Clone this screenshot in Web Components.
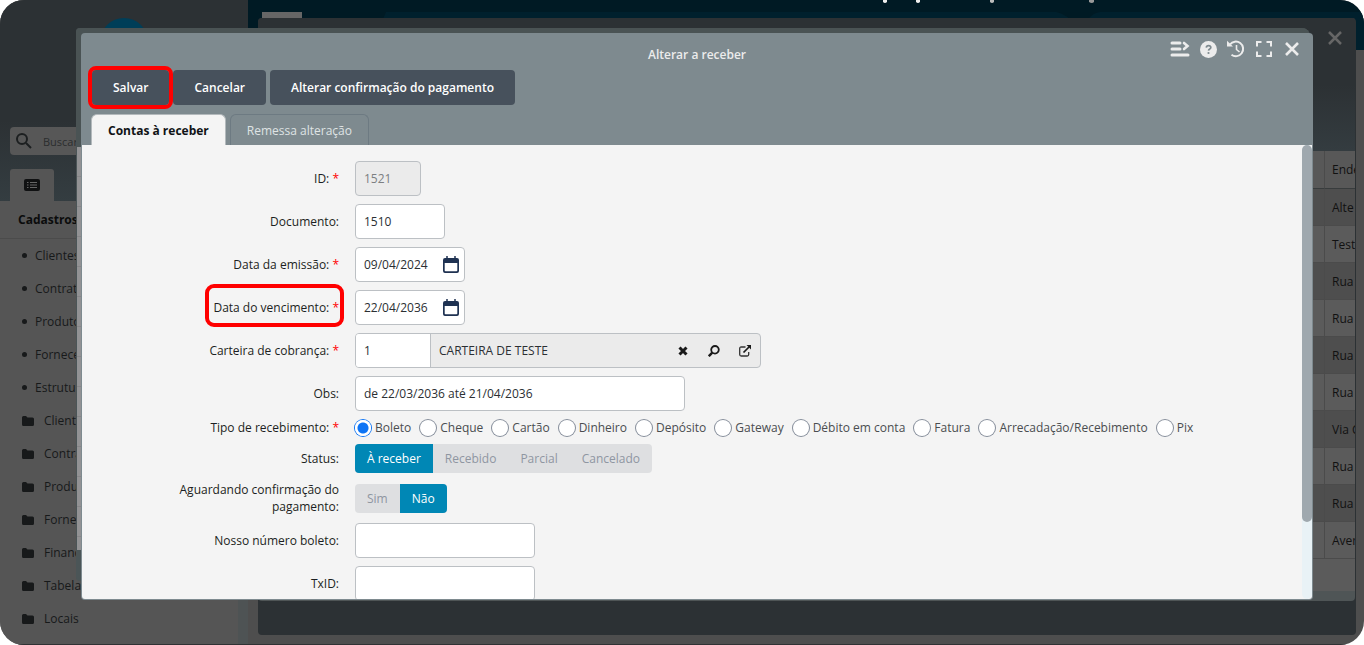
<!DOCTYPE html>
<html lang="pt-BR">
<head>
<meta charset="utf-8">
<title>Alterar a receber</title>
<style>
  html, body { margin: 0; background: #fff; }
  body { font: 12px/17px "Open Sans", "Noto Sans", sans-serif; color: #1c1f22; }
</style>
</head>
<body>
<app-shell></app-shell>

<template id="t-app-shell">
  <style>
    :host { display: flex; position: relative; height: 100vh; overflow: hidden; border-radius: 24px; background: #4e4e4e; }
    side-nav { flex: 0 0 248px; }
    main { flex: 1; min-width: 0; }
    .bar { height: 50px; background: #001a24; display: flex; align-items: flex-start; }
    .bar svg { width: 100%; height: 50px; display: block; }
    list-window { position: absolute; inset: 18px 8px 10px 258px; }
    stacked-window { position: absolute; inset: 28px 54px 64px 76px; }
    edit-dialog { position: absolute; inset: 33px 51px 45px 81px; }
    .base { position: absolute; inset: auto 0 0 0; height: 1px; background: #303234; }
  </style>
  <side-nav></side-nav>
  <main>
    <div class="bar">
      <svg viewBox="0 0 1116 50" preserveAspectRatio="xMinYMin slice" aria-hidden="true">
        <path d="M122 50 138 12h670q12 2 18 14v24zM840 50V20q4-7 12-8h400q16 2 22 12v26z" fill="#00202d"/>
        <path d="M14 12h40v8H14z" fill="#666"/>
        <g fill="#eee"><path d="M635 0h4v2q-2 2-4 0zM668 0h4v2q-2 2-4 0z"/><path d="M742 0h4v2q-2 2-4 0z" fill="#bbb"/><path d="M841 0h5v2q-2 2-5 0z" fill="#999"/></g>
      </svg>
    </div>
  </main>
  <list-window></list-window>
  <stacked-window></stacked-window>
  <edit-dialog></edit-dialog>
  <div class="base"></div>
</template>

<template id="t-side-nav">
  <style>
    :host { display: flex; flex-direction: column; background: #555; color: #17191a; overflow: hidden; }
    header { height: 201px; box-sizing: border-box; padding: 18px 10px 0; display: flex; flex-direction: column; background: linear-gradient(#2c3134 60%, #343d41); }
    .logo { align-self: center; width: 48px; height: 48px; border-radius: 50%; background: #003e58; }
    .search { margin-top: 61px; height: 28px; display: flex; align-items: center; gap: 8px; padding: 0 5px; background: #575757; border-radius: 4px; }
    .search input { border: 0; background: none; font: inherit; font-size: 11px; width: 150px; outline: 0; }
    .search input::placeholder { color: #2b2d2e; opacity: 1; }
    .tab { margin-top: 14px; width: 44px; height: 32px; border: 0; padding: 0; background: #555; border-radius: 3px 3px 0 0; display: grid; place-items: center; }
    h2 { margin: 0; height: 37px; padding-left: 18px; font: 700 12px/37px "Open Sans", sans-serif; border-bottom: 1px solid #4b4b4b; color: #0b0c0c; }
    .list { flex: 1; min-height: 0; display: flex; }
    ul { flex: 1; list-style: none; margin: 0; padding: 0; }
    .rail { width: 10px; background: #4e5354; }
  </style>
  <header>
    <div class="logo"></div>
    <label class="search">
      <svg width="18" height="18" viewBox="0 0 18 18" fill="none" stroke="#1c1f20" stroke-width="2"><circle cx="7" cy="7" r="5"/><path d="m11 11 5 5"/></svg>
      <input type="text" placeholder="Buscar" aria-label="Buscar">
    </label>
    <button class="tab" aria-label="Menu"><svg width="16" height="12" viewBox="0 0 16 12"><rect width="16" height="12" rx="2" fill="#101112"/><path d="M3 3.500h1.500M3 6h1.500M3 8.500h1.500M6 3.500h7M6 6h7M6 8.500h7" stroke="#666"/></svg></button>
  </header>
  <h2>Cadastros</h2>
  <div class="list">
    <ul>
      <nav-item>Clientes</nav-item><nav-item>Contratos</nav-item><nav-item>Produtos</nav-item><nav-item>Fornecedores</nav-item><nav-item>Estrutura</nav-item>
      <nav-item folder>Clientes</nav-item><nav-item folder>Contratos</nav-item><nav-item folder>Produtos</nav-item><nav-item folder>Fornecedores</nav-item><nav-item folder>Financeiro</nav-item><nav-item folder>Tabelas</nav-item><nav-item folder>Locais</nav-item>
    </ul>
    <div class="rail"></div>
  </div>
</template>

<template id="t-nav-item">
  <style>
    :host { display: block; }
    a { display: flex; align-items: center; height: 33px; padding-left: 22px; color: inherit; text-decoration: none; }
    .dot { width: 5px; height: 5px; border-radius: 50%; background: #17191a; margin-right: 8px; }
    svg { display: none; margin-right: 10px; }
    :host([folder]) .dot { display: none; }
    :host([folder]) svg { display: block; }
  </style>
  <a href="#"><span class="dot"></span><svg width="12" height="10" viewBox="0 0 12 10"><path d="M0 1.500Q0 0 1.500 0H4l1.500 1.500h5Q12 1.500 12 3v5.500Q12 10 10.500 10h-9Q0 10 0 8.500z" fill="#17191a"/></svg><slot></slot></a>
</template>

<template id="t-list-window">
  <style>
    :host { display: flex; flex-direction: column; box-sizing: border-box; background: #2c3134; border-radius: 4px; overflow: hidden; padding-right: 1px; color: #111; }
    header { flex: 0 0 133px; display: flex; justify-content: flex-end; align-items: flex-start; box-sizing: border-box; padding: 13px 13px 0 0; background: linear-gradient(#2c3134 50%, #343c40); }
    button { border: 0; padding: 0; background: none; width: 14px; height: 14px; display: grid; }
    .body { flex: 1; min-height: 0; overflow: hidden; background: #5b5b5b; }
    table { width: 100%; border-collapse: separate; border-spacing: 0; table-layout: fixed; }
    th, td { height: 36px; padding: 0; border-bottom: 1px solid #4b4b4b; font-weight: 400; text-align: left; white-space: nowrap; overflow: hidden; }
    th { height: 37px; background: #585858; border-bottom: 1px solid #383c3d; }
    tbody tr:nth-child(odd) td { background: #4e4e4e; }
    th:last-child, td:last-child { width: 23px; padding-left: 7px; border-left: 1px solid #4b4b4b; }
    .rail { flex: 0 0 10px; background: #4f5556; border-radius: 0 0 4px 4px; }
    footer { flex: 0 0 34px; }
  </style>
  <header><button aria-label="Fechar"><svg width="14" height="14" viewBox="0 0 14 14" stroke="#666" stroke-width="2.500"><path d="m1 1 12 12M13 1 1 13"/></svg></button></header>
  <div class="body">
    <table>
      <thead><tr><th></th><th>Ende</th></tr></thead>
      <tbody>
        <tr><td></td><td>Alte</td></tr><tr><td></td><td>Test</td></tr><tr><td></td><td>Rua</td></tr><tr><td></td><td>Rua</td></tr><tr><td></td><td>Rua</td></tr>
        <tr><td></td><td>Rua</td></tr><tr><td></td><td>Via C</td></tr><tr><td></td><td>Rua</td></tr><tr><td></td><td>Rua</td></tr><tr><td></td><td>Aver</td></tr>
      </tbody>
    </table>
  </div>
  <div class="rail"></div>
  <footer></footer>
</template>

<template id="t-stacked-window">
  <style>
    :host { display: flex; flex-direction: column; border-radius: 4px 8px 4px 4px; overflow: hidden; background: #4b5557; }
    .head { flex: 0 0 119px; background: #4a5354; }
    .body { flex: 1; margin: 0 1px; background: repeating-linear-gradient(#929294 0 29px, #858587 29px 30px); }
    .foot { flex: 0 0 31px; }
  </style>
  <div class="head"></div><div class="body"></div><div class="foot"></div>
</template>

<template id="t-form-row">
  <style>
    :host { display: grid; grid-template-columns: 257px 1fr; column-gap: 16px; align-items: center; }
    .label { display: flex; justify-content: flex-end; text-align: right; }
  </style>
  <div class="label"><slot name="label"></slot></div>
  <div><slot></slot></div>
</template>

<template id="t-radio-option">
  <style>
    :host { display: block; }
    label { display: flex; align-items: center; gap: 4px; height: 17px; color: #4a4d50; }
    input { appearance: none; width: 16px; height: 16px; margin: 0; border-radius: 50%; background: #fff; box-shadow: 0 0 0 1px #868e9b; }
    input:checked { background: radial-gradient(circle, #0d74f5 5px, #fff 6px); box-shadow: 0 0 0 1px #0d74f5; }
  </style>
  <label><input type="radio"><span><slot></slot></span></label>
</template>

<template id="t-segment-group">
  <style>
    :host { display: flex; width: max-content; height: 29px; border-radius: 4px; overflow: hidden; background: #dedfe1; }
    ::slotted(button) { border: 0; padding: 0 12px; font: inherit; background: none; color: #8f96a1; }
    ::slotted(button[aria-pressed="true"]) { background: #0087b5; color: #fff; }
  </style>
  <slot></slot>
</template>

<template id="t-edit-dialog">
  <style>
    :host { display: flex; flex-direction: column; background: #7e8a8f; border-radius: 4px; overflow: hidden; }
    .title { flex: 0 0 37px; display: grid; grid-template-columns: 1fr auto 1fr; align-items: start; }
    h1 { grid-column: 2; margin: 0; padding-top: 13px; font-size: 12px; line-height: 17px; font-weight: 600; color: #ececec; }
    .tools { justify-self: end; display: flex; align-items: center; gap: 8px; height: 20px; padding: 6px 11px 0 0; }
    .tools button { display: grid; place-items: center; width: 20px; height: 20px; border: 0; padding: 0; background: none; }
    .tools svg { display: block; }
    .actions { display: flex; gap: 4px; padding-left: 11px; }
    .actions button { height: 35px; padding: 0 21px; border: 0; border-radius: 4px; background: #47515c; color: #fff; font: inherit; font-weight: 600; }
    .actions .mark { outline: 4px solid #f00; position: relative; }
    .tabs { display: flex; gap: 4px; padding: 9px 0 0 10px; }
    .tabs button { height: 31px; box-sizing: border-box; border: 1px solid #6d7a82; border-bottom: 0; border-radius: 6px 6px 0 0; padding: 0 16px; background: none; color: #dfe3e4; font: inherit; font-weight: 500; }
    .tabs .on { background: #f4f4f4; border-color: #b3b9bc; color: #101316; font-weight: 700; }
    .view { flex: 1; min-height: 0; display: flex; margin: 0 1px 1px; background: #f4f4f4; border-radius: 0 0 3px 3px; overflow: hidden; }
    form { flex: 1; min-width: 0; overflow: hidden; display: flex; flex-direction: column; gap: 8px; padding-top: 16px; }
    form-row { flex: none; }
    label { position: relative; display: block; }
    label i { color: #f00; font-style: normal; }
    .mark-label::after { content: ""; position: absolute; inset: -15px -5px -11px -8px; border: 4px solid #f00; border-radius: 9px; }
    input, output { box-sizing: border-box; height: 35px; border: 1px solid #bcc0c4; border-radius: 4px; padding: 0 8px; font: inherit; color: #2b2f33; background: #fff; display: block; }
    input:disabled { background: #ebebeb; color: #7c7f82; }
    .w66 { width: 66px; } .w90 { width: 90px; } .w180 { width: 180px; } .w330 { width: 330px; }
    .date { display: flex; align-items: center; width: 110px; box-sizing: border-box; height: 35px; border: 1px solid #bcc0c4; border-radius: 4px; background: #fff; }
    .date input { flex: 1; min-width: 0; border: 0; background: none; height: 33px; padding-right: 0; }
    .date button, .lookup button { border: 0; padding: 0; background: none; display: grid; place-items: center; }
    .date button { width: 16px; margin-right: 5px; }
    .lookup { display: flex; width: 406px; box-sizing: border-box; height: 35px; border: 1px solid #bcc0c4; border-radius: 4px; overflow: hidden; background: #ebebeb; padding-right: 7px; }
    .lookup input { width: 74px; height: 33px; border: 0; border-radius: 0; }
    .lookup output { flex: 1; height: 33px; line-height: 33px; border-width: 0 0 0 1px; border-radius: 0; background: none; }
    .lookup button { width: 16px; margin-left: 15px; }
    .radios { display: flex; gap: 9px; }
    .two { width: 170px; }
    .rail { flex: 0 0 10px; background: #e9f2f6; border-radius: 5px; }
    .thumb { height: 83%; background: #9fa8ae; border-radius: 5px; }
  </style>
  <div class="title">
    <h1>Alterar a receber</h1>
    <div class="tools">
      <button aria-label="Opções"><svg width="20" height="16" viewBox="0 0 20 16" fill="none" stroke="#ececec" stroke-width="3" stroke-linecap="round"><path d="M2 2h8M2 8h8M2 14h16"/><path d="m14 2 3.500 3L14 8" stroke-width="2.600"/></svg></button>
      <button aria-label="Ajuda"><svg width="17" height="17" viewBox="0 0 17 17"><circle cx="8.500" cy="8.500" r="8.500" fill="#ececec"/><path d="M6.300 6.700q.2-2 2.300-2t2.200 1.700q0 1-1.100 1.600T8.500 9.600" fill="none" stroke="#7e8a8f" stroke-width="1.700"/><circle cx="8.500" cy="12" r="1.100" fill="#7e8a8f"/></svg></button>
      <button aria-label="Histórico"><svg width="18" height="18" viewBox="0 0 18 18" fill="none" stroke="#ececec" stroke-width="2"><path d="M3 4.500A7.300 7.300 0 1 1 4.500 14.800"/><path d="M9.500 5v4.500l3 2.500" stroke-width="1.600"/><path d="M0 .8V6.500h6z" fill="#ececec" stroke="none"/></svg></button>
      <button aria-label="Tela cheia"><svg width="16" height="16" viewBox="0 0 16 16" fill="none" stroke="#ececec" stroke-width="2"><path d="M1 5.500V1h4.500M10.500 1H15v4.500M15 10.500V15h-4.500M5.500 15H1v-4.500"/></svg></button>
      <button aria-label="Fechar"><svg width="14" height="14" viewBox="0 0 14 14" stroke="#ececec" stroke-width="2.600"><path d="m1 1 12 12M13 1 1 13"/></svg></button>
    </div>
  </div>
  <div class="actions"><button class="mark">Salvar</button><button>Cancelar</button><button>Alterar confirmação do pagamento</button></div>
  <div class="tabs" role="tablist"><button class="on" role="tab" aria-selected="true">Contas à receber</button><button role="tab">Remessa alteração</button></div>
  <div class="view">
    <form>
      <form-row><label slot="label" for="id">ID: <i>*</i></label><input id="id" class="w66" value="1521" disabled></form-row>
      <form-row><label slot="label" for="doc">Documento:</label><input id="doc" class="w90" value="1510"></form-row>
      <form-row><label slot="label" for="emi">Data da emissão: <i>*</i></label><div class="date"><input id="emi" value="09/04/2024"><button type="button" aria-label="Calendário"><svg width="16" height="17" viewBox="0 0 16 17"><path d="M2 2h12q2 0 2 2v11q0 2-2 2H2q-2 0-2-2V4q0-2 2-2zm-.3 5v7.500q0 .8.800.800h11q.8 0 .8-.8V7z" fill="#1f3252" fill-rule="evenodd"/><path d="M4 0v3M12 0v3" stroke="#1f3252" stroke-width="1.500"/></svg></button></div></form-row>
      <form-row><label slot="label" for="ven" class="mark-label">Data do vencimento: <i>*</i></label><div class="date"><input id="ven" value="22/04/2036"><button type="button" aria-label="Calendário"><svg width="16" height="17" viewBox="0 0 16 17"><path d="M2 2h12q2 0 2 2v11q0 2-2 2H2q-2 0-2-2V4q0-2 2-2zm-.3 5v7.500q0 .8.800.800h11q.8 0 .8-.8V7z" fill="#1f3252" fill-rule="evenodd"/><path d="M4 0v3M12 0v3" stroke="#1f3252" stroke-width="1.500"/></svg></button></div></form-row>
      <form-row><label slot="label" for="car">Carteira de cobrança: <i>*</i></label>
        <div class="lookup"><input id="car" value="1"><output>CARTEIRA DE TESTE</output>
          <button type="button" aria-label="Limpar"><svg width="10" height="10" viewBox="0 0 10 10" stroke="#1a1a1a" stroke-width="3"><path d="m1.500 1.500 7 7M8.500 1.500l-7 7"/></svg></button>
          <button type="button" aria-label="Pesquisar"><svg width="12" height="12" viewBox="0 0 12 12" fill="none" stroke="#1a1a1a"><circle cx="7" cy="4.800" r="3.800" stroke-width="1.800"/><path d="M4.300 7.700.8 11.200" stroke-width="2.400"/></svg></button>
          <button type="button" aria-label="Abrir"><svg width="12" height="12" viewBox="0 0 12 12" fill="none" stroke="#333" stroke-width="1.300"><path d="M6.500 2H2.200Q.7 2 .7 3.500v6q0 1.500 1.500 1.500h6q1.500 0 1.500-1.500V7"/><path d="M4.500 7.500 10 2" stroke-width="1.700" stroke="#1a1a1a"/><path d="M7.500 0H12v4.500z" fill="#1a1a1a" stroke="none"/></svg></button>
        </div></form-row>
      <form-row><label slot="label" for="obs">Obs:</label><input id="obs" class="w330" value="de 22/03/2036 até 21/04/2036"></form-row>
      <form-row><label slot="label">Tipo de recebimento: <i>*</i></label>
        <div class="radios" role="radiogroup" aria-label="Tipo de recebimento"><radio-option checked>Boleto</radio-option><radio-option>Cheque</radio-option><radio-option>Cartão</radio-option><radio-option>Dinheiro</radio-option><radio-option>Depósito</radio-option><radio-option>Gateway</radio-option><radio-option>Débito em conta</radio-option><radio-option>Fatura</radio-option><radio-option>Arrecadação/Recebimento</radio-option><radio-option>Pix</radio-option></div></form-row>
      <form-row><label slot="label">Status:</label><segment-group><button type="button" aria-pressed="true">À receber</button><button type="button">Recebido</button><button type="button">Parcial</button><button type="button">Cancelado</button></segment-group></form-row>
      <form-row><label slot="label" class="two">Aguardando confirmação do pagamento:</label><segment-group><button type="button">Sim</button><button type="button" aria-pressed="true">Não</button></segment-group></form-row>
      <form-row><label slot="label" for="nos">Nosso número boleto:</label><input id="nos" class="w180"></form-row>
      <form-row><label slot="label" for="tx">TxID:</label><input id="tx" class="w180"></form-row>
    </form>
    <div class="rail"><div class="thumb"></div></div>
  </div>
</template>

<script>
  const define = (name, setup) => customElements.define(name, class extends HTMLElement {
    constructor() {
      super();
      this.attachShadow({ mode: 'open' }).append(document.getElementById('t-' + name).content.cloneNode(true));
    }
    connectedCallback() { if (setup) setup(this); }
  });
  ['nav-item', 'side-nav', 'list-window', 'stacked-window', 'form-row', 'segment-group'].forEach(n => define(n));
  define('radio-option', el => {
    const input = el.shadowRoot.querySelector('input');
    input.checked = el.hasAttribute('checked');
    input.addEventListener('change', () => {
      el.parentElement.querySelectorAll('radio-option').forEach(o => {
        o.shadowRoot.querySelector('input').checked = o === el;
      });
    });
  });
  define('edit-dialog');
  define('app-shell');
</script>
</body>
</html>
